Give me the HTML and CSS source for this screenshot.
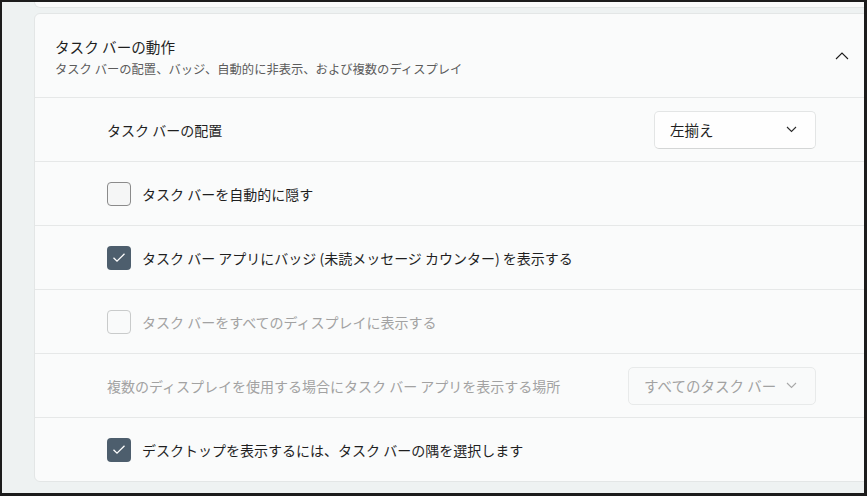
FILE: index.html
```html
<!DOCTYPE html>
<html lang="ja">
<head>
  <meta charset="UTF-8">
  <title>タスク バーの動作</title>
  <link rel="stylesheet" href="styles.css">
</head>
<body>
  <div class="frame">
    <div class="prev-card"></div>

    <section class="expander">
      <div class="expander-head">
        <div class="head-text">
          <div class="head-title">タスク バーの動作</div>
          <div class="head-sub">タスク バーの配置、バッジ、自動的に非表示、および複数のディスプレイ</div>
        </div>
        <svg class="chevron-up" width="14" height="8" viewBox="0 0 14 8">
          <path d="M1 7 L7 1 L13 7" fill="none" stroke="#1b1b1b" stroke-width="1.1"/>
        </svg>
      </div>

      <div class="row">
        <span class="row-label">タスク バーの配置</span>
        <div class="dropdown">
          <span>左揃え</span>
          <svg class="chevron-down" width="11" height="7" viewBox="0 0 11 7">
            <path d="M1 1 L5.5 5.5 L10 1" fill="none" stroke="#2a2a2a" stroke-width="1.1"/>
          </svg>
        </div>
      </div>

      <div class="row">
        <span class="box"></span>
        <span class="row-label">タスク バーを自動的に隠す</span>
      </div>

      <div class="row">
        <span class="box checked">
          <svg width="14" height="11" viewBox="0 0 14 11"><path d="M1.5 5.8 L5 9.2 L12.5 1.8" fill="none" stroke="#fff" stroke-width="1.3"/></svg>
        </span>
        <span class="row-label">タスク バー アプリにバッジ (未読メッセージ カウンター) を表示する</span>
      </div>

      <div class="row disabled">
        <span class="box"></span>
        <span class="row-label">タスク バーをすべてのディスプレイに表示する</span>
      </div>

      <div class="row disabled">
        <span class="row-label">複数のディスプレイを使用する場合にタスク バー アプリを表示する場所</span>
        <div class="dropdown wide">
          <span>すべてのタスク バー</span>
          <svg class="chevron-down" width="11" height="7" viewBox="0 0 11 7">
            <path d="M1 1 L5.5 5.5 L10 1" fill="none" stroke="#a8a8a8" stroke-width="1.1"/>
          </svg>
        </div>
      </div>

      <div class="row">
        <span class="box checked">
          <svg width="14" height="11" viewBox="0 0 14 11"><path d="M1.5 5.8 L5 9.2 L12.5 1.8" fill="none" stroke="#fff" stroke-width="1.3"/></svg>
        </span>
        <span class="row-label">デスクトップを表示するには、タスク バーの隅を選択します</span>
      </div>
    </section>
  </div>
</body>
</html>
```

FILE: styles.css
```css
body {
  margin: 0;
  font-family: 'Noto Sans CJK JP', 'Noto Sans', sans-serif;
  color: #1f1f1f;
  background: #fff;
}

.frame {
  width: 867px;
  height: 496px;
  box-sizing: border-box;
  border-style: solid;
  border-color: #1c1c1c;
  border-width: 2px 3px 3px 2px;
  background: #eef2f2;
  padding-left: 32px;
  overflow: hidden;
}

.prev-card {
  height: 5px;
  margin-right: -6px;
  background: #fafbfb;
  border: 1px solid #e3e6e6;
  border-top: none;
  border-radius: 0 0 6px 6px;
}

.expander {
  margin-top: 5px;
  margin-right: -6px;
  background: #fafbfb;
  border: 1px solid #e3e6e6;
  border-radius: 6px;
}

.expander-head {
  height: 83px;
  display: flex;
  align-items: center;
  justify-content: space-between;
  padding: 0 20px 0 20px;
  border-bottom: 1px solid #e6e8e8;
}

.head-text {
  display: flex;
  flex-direction: column;
  margin-top: 3px;
}

.head-title {
  font-size: 14.6px;
  line-height: 24px;
}

.head-sub {
  font-size: 12.3px;
  line-height: 20px;
  color: #5c5c5c;
}

.row {
  height: 63px;
  display: flex;
  align-items: center;
  padding: 0 53px 0 72px;
  border-bottom: 1px solid #e6e8e8;
  font-size: 14px;
}

.row:last-child {
  border-bottom: none;
}

.row-label {
  flex: 1;
  line-height: 20px;
}

.row.disabled {
  color: #a2a2a2;
}

.box {
  width: 22px;
  height: 22px;
  flex: none;
  margin-right: 11px;
  border: 1px solid #8b8b8b;
  border-radius: 4px;
  background: #f5f6f6;
  display: flex;
  align-items: center;
  justify-content: center;
}

.box.checked {
  width: 24px;
  height: 24px;
  border: none;
  background: #4d5e6d;
}

.row.disabled .box {
  border-color: #c9cbcb;
  background: #f9fafa;
}

.dropdown {
  width: 162px;
  height: 38px;
  box-sizing: border-box;
  display: flex;
  align-items: center;
  justify-content: space-between;
  padding: 0 18px 0 15px;
  background: #fefefe;
  border: 1px solid #e3e5e5;
  border-bottom-color: #d4d6d6;
  border-radius: 5px;
  font-size: 14.5px;
  color: #1f1f1f;
}

.dropdown.wide {
  width: 188px;
  background: #f9fafa;
  border-color: #e8eaea;
  color: #a2a2a2;
}
```
